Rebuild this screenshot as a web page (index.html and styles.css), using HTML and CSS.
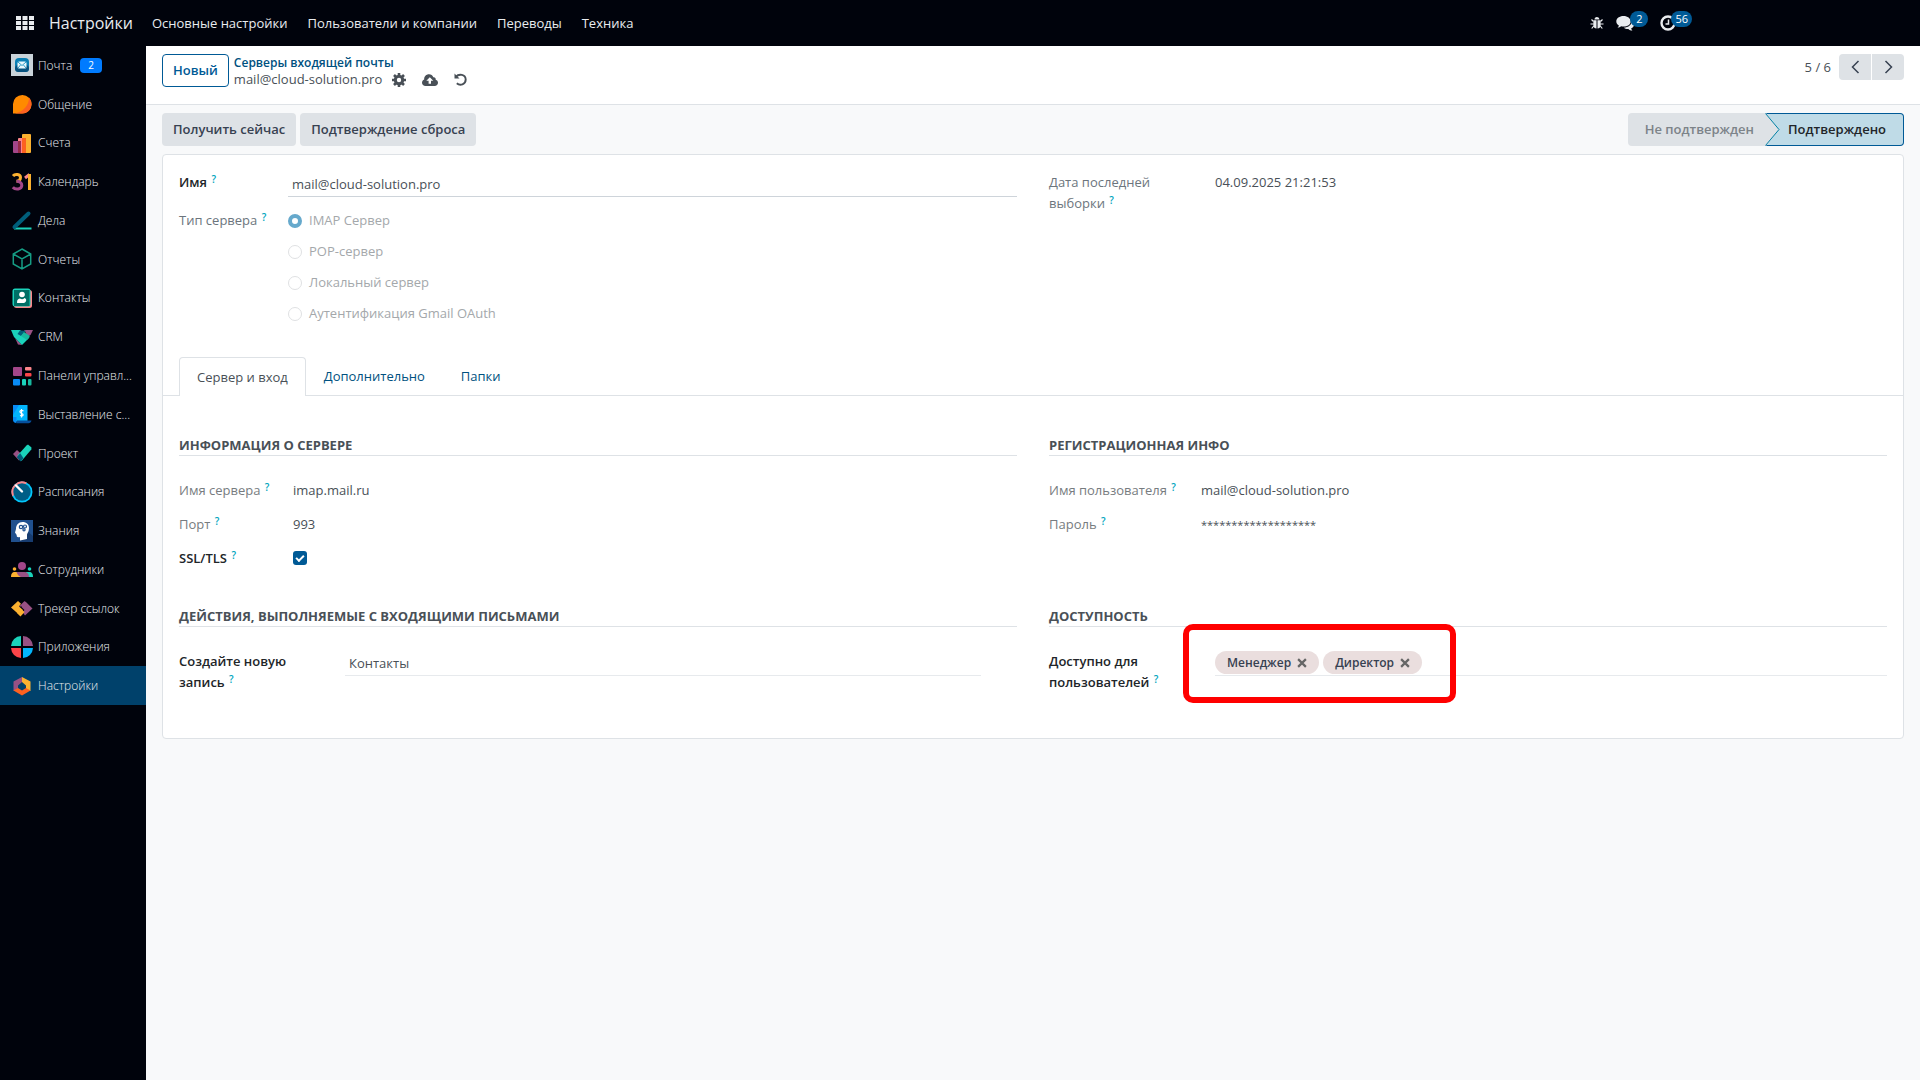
FILE: index.html
```html
<!DOCTYPE html>
<html lang="ru">
<head>
  <meta charset="UTF-8">
  <meta name="viewport" content="width=device-width, initial-scale=1.0">
  <title>Серверы входящей почты</title>
  <link rel="stylesheet" href="styles.css">
</head>
<body>
  <header class="navbar">
    <button class="apps-btn" aria-label="Приложения">
      <svg width="18" height="14" viewBox="0 0 18 14" fill="#e9ecef"><path d="M0 0h5v4H0zM6.500 0h5v4h-5zM13 0h5v4h-5zM0 5h5v4H0zM6.500 5h5v4h-5zM13 5h5v4h-5zM0 10h5v4H0zM6.500 10h5v4h-5zM13 10h5v4h-5z"/></svg>
    </button>
    <a class="brand" href="#">Настройки</a>
    <nav class="menu">
      <a href="#">Основные настройки</a>
      <a href="#">Пользователи и компании</a>
      <a href="#">Переводы</a>
      <a href="#">Техника</a>
    </nav>
    <div class="systray">
      <button aria-label="Отладка">
        <svg width="14" height="14" viewBox="0 0 14 14"><path d="M4.500 3.500a2.500 2.500 0 0 1 5 0z" fill="#e9ecef"/><path d="M3.500 4.200h3v8.300c-2 0-3.300-1.500-3.300-4zM7.500 4.200h3l.3 4.300c0 2.500-1.300 4-3.300 4z" fill="#e9ecef"/><path d="M3.500 5.500 1.500 3.500M10.500 5.500l2-2M3.300 8H.5M10.700 8h2.800M3.700 10l-2 2.500M10.300 10l2 2.500" stroke="#e9ecef" stroke-width="1.200" fill="none"/></svg>
      </button>
      <button class="chat" aria-label="Обсуждения">
        <svg width="19" height="15" viewBox="0 0 19 15" fill="#e9ecef"><path d="M7.500 0C3.400 0 .3 2.400.3 5.400c0 1.700 1 3.200 2.600 4.200-.2.800-.7 1.500-1.400 2.100 1.400 0 2.700-.6 3.700-1.400.7.200 1.500.3 2.300.3 4.100 0 7.200-2.300 7.200-5.200S11.600 0 7.500 0z"/><path d="M16 4.300c.1 4.200-3.600 7.300-8.300 7.500 1.200.9 2.900 1.300 4.700 1.200.9.900 2.300 1.600 4 1.600-.6-.6-1.100-1.300-1.300-2.100 1.900-.8 3-2.200 3-3.900 0-1.700-.8-3.300-2.100-4.300z"/></svg>
        <span class="count">2</span>
      </button>
      <button class="clock" aria-label="Действия">
        <svg width="16" height="16" viewBox="0 0 16 16" fill="none" stroke="#e9ecef"><circle cx="8" cy="8" r="6.500" stroke-width="2.400"/><path d="M8.500 4.500V9H5.500" stroke-width="1.500"/></svg>
        <span class="count">56</span>
      </button>
    </div>
  </header>

  <div class="layout">
    <aside class="sidebar">
      <ul>
        <li><a href="#">
          <svg width="22" height="22" viewBox="0 0 22 22"><path fill="#c9d3da" d="M0 0h22v22H0z"/><rect x="4" y="4" width="14" height="14" rx="4" fill="#0a7fb4"/><rect x="4" y="11" width="14" height="7" rx="3.500" fill="#07527f"/><rect x="6.500" y="7.500" width="9" height="7" rx="1.500" fill="#e8f7fc"/><path d="m7 8 4 3.500L15 8M7 14l2.500-3M15 14l-2.500-3" fill="none" stroke="#2b9cc8"/></svg>
          <span>Почта</span><b class="pill">2</b></a></li>
        <li><a href="#">
          <svg width="22" height="22" viewBox="0 0 22 22"><path fill="#ff8a00" d="M2 20.500V11a9.300 9.300 0 1 1 9.300 9.500z"/><path fill="#fc6120" d="M18 4.500c3.500 4 3 9.500.3 12.700-2 2.300-4.300 3.300-7 3.300H4C13 18.500 18 12 18 4.500z"/></svg>
          <span>Общение</span></a></li>
        <li><a href="#">
          <svg width="22" height="22" viewBox="0 0 22 22"><rect x="2" y="9" width="8" height="12" rx="1" fill="#a24689"/><rect x="7" y="6" width="8" height="15" rx="1" fill="#fc868b"/><path fill="#962b48" d="M7 9h3v12H7z"/><rect x="11" y="2" width="9" height="19" rx="1" fill="#fbb130"/><path fill="#fc6120" d="M11 6h4v15h-4z"/></svg>
          <span>Счета</span></a></li>
        <li><a href="#">
          <svg width="22" height="22" viewBox="0 0 22 22" fill="none" stroke-width="3"><path stroke="#fbb130" d="M2 5c2-2.500 7.500-2 7.500 1.500 0 2.500-2 3.800-4 3.800"/><path stroke="#a24689" d="M5.500 10.300c3.200 0 5.300 1.500 5.300 4 0 4.500-6.500 4.700-9 2"/><path stroke="#fc868b" d="m14 7 4.500-3.500"/><path stroke="#fbb130" d="M18.500 3v16"/></svg>
          <span>Календарь</span></a></li>
        <li><a href="#">
          <svg width="22" height="22" viewBox="0 0 22 22" fill="none"><path stroke="#1ad3bb" stroke-width="2" d="M3 19.500h17.500"/><path stroke="#005e7a" stroke-width="4" stroke-linecap="round" d="M3.500 18 17.500 4.500"/></svg>
          <span>Дела</span></a></li>
        <li><a href="#">
          <svg width="22" height="22" viewBox="0 0 22 22" fill="none" stroke="#159c84" stroke-width="1.500"><path d="m11 1 8.700 5v10L11 21l-8.700-5V6zM2.300 6l8.700 5 8.700-5M11 11v10"/></svg>
          <span>Отчеты</span></a></li>
        <li><a href="#">
          <svg width="22" height="22" viewBox="0 0 22 22"><rect x="3" y="3" width="18" height="18" rx="2.500" fill="#fc868b"/><rect x="1.500" y="1.500" width="18" height="18" rx="2.500" fill="#1ad3bb"/><path fill="#006f66" d="M3 3h15.500v16H3z"/><circle cx="11" cy="7.500" r="2.800" fill="#fff"/><path fill="#fff" d="M6 15.500c0-3 1.500-4 3-4 1.500 1 3 1 4.500-.500 1.500.500 2 1.500 1.500 3s-1.500 2-3 2H7c-.600 0-1 0-1-.500z"/></svg>
          <span>Контакты</span></a></li>
        <li><a href="#">
          <svg width="22" height="22" viewBox="0 0 22 22"><path fill="#985184" d="M13 4h9l-2.500 5L17 10.500z"/><path fill="#985184" d="m4 12 7 7-4-.500z"/><path fill="#1ad3bb" d="M0 4h9l9.500 7.500-7.500 7.500L3 11z"/><path fill="#005e7a" d="m9 4.500 6 .200-5 5.300-3.500-2z"/><path fill="#17b89f" d="m13 6 6 4-3 4-6-4z"/></svg>
          <span>CRM</span></a></li>
        <li><a href="#">
          <svg width="22" height="22" viewBox="0 0 22 22"><rect x="2" y="2" width="9" height="9" rx="1" fill="#a24689"/><rect x="14" y="2" width="6.500" height="3.500" rx="1" fill="#fc868b"/><rect x="14" y="8" width="6.500" height="3.500" rx="1" fill="#fc4449"/><rect x="2" y="14" width="7" height="6.500" rx="1" fill="#088bf5"/><rect x="11" y="14" width="4" height="6.500" rx="1" fill="#1ad3bb"/><rect x="17" y="14" width="3.500" height="6.500" rx="1" fill="#17b89f"/></svg>
          <span>Панели управл...</span></a></li>
        <li><a href="#">
          <svg width="22" height="22" viewBox="0 0 22 22"><path fill="#02b5fc" d="M2 2h14.500v17.500H7L2 16z"/><path fill="#088bf5" d="M2 2h6L2 12zM2 14h3.500v6C3 20 2 18.500 2 17z"/><path fill="#064f9c" d="M6 17.500h14.500c-.500 2-1.500 2.700-3 2.700H5c1 0 1.200-1.200 1-2.700z"/><path d="M12.500 8c-3-1.800-5 1-2.300 2.300 3 .800 2.200 3.700-1.200 2.200M10.500 6v8.500" fill="none" stroke="#fff" stroke-width="1.200"/></svg>
          <span>Выставление с...</span></a></li>
        <li><a href="#">
          <svg width="22" height="22" viewBox="0 0 22 22"><path fill="#985184" d="m2 12 4-4 6 5.500-4 5z"/><path fill="#1ad3bb" d="m15.500 3.500 1.500-1 3.500 3-.200 2L10.500 19 6.500 13.500z"/><path fill="#005e7a" d="m9.200 11.200 3.300 5-3 3.300-3.700-4.300z"/></svg>
          <span>Проект</span></a></li>
        <li><a href="#">
          <svg width="22" height="22" viewBox="0 0 22 22"><circle cx="11" cy="11" r="10.500" fill="#02c7fc"/><path fill="#fc868b" d="M1.500 15.500A10.500 10.500 0 0 1 16 1.800z"/><circle cx="11" cy="11" r="8.700" fill="#005e86"/><path stroke="#fff" stroke-width="2.400" stroke-linecap="round" d="m5 4.500 6 6"/></svg>
          <span>Расписания</span></a></li>
        <li><a href="#">
          <svg width="22" height="22" viewBox="0 0 22 22"><path fill="#20508e" d="M0 0h22v22H0z"/><path fill="#173c70" d="m16 11 6 5v6H8z"/><path fill="#fff" d="M11.500 2c4 0 6.500 2.500 6.500 6s-1.500 5-2 6.500V19l-7 1.500V17c-2.500.500-3.500 0-3.300-2L4 12.500 5 9c0-4 2.500-7 6.500-7z"/><g fill="none" stroke="#20508e" stroke-width="1.200"><circle cx="10" cy="7" r="1.700"/><circle cx="14" cy="6.500" r="1.500"/><circle cx="13" cy="9.700" r="1.100"/></g></svg>
          <span>Знания</span></a></li>
        <li><a href="#">
          <svg width="22" height="22" viewBox="0 0 22 22"><circle cx="11" cy="8" r="4" fill="#a24689"/><circle cx="3.500" cy="11" r="1.800" fill="#fbb130"/><circle cx="18.500" cy="11" r="1.800" fill="#1ad3bb"/><path fill="#fbb130" d="M0 19c0-3 1-5 4-5h3l4 5z"/><path fill="#1ad3bb" d="M22 19c0-3-1-5-4-5h-3l-2 5z"/><path fill="#985184" d="M5.500 14h8c3 0 4.500 2 4.500 5h-7c-3 0-4.500-2.500-5.500-5z"/></svg>
          <span>Сотрудники</span></a></li>
        <li><a href="#">
          <svg width="22" height="22" viewBox="0 0 22 22"><path fill="#985184" d="m14.500 4.500 7 7-7.500 7-2.500-3.500 2-2-3-3z"/><path fill="#fbb130" d="M0 10.500 7 4l3 2.700L8 9.500l4 3.500-3 5.500z"/><path fill="#985184" d="m8 9.500 5.500-5.500 3 4-3 3.500-2.500-2z"/><path fill="#fbb130" d="m10 12 3.500 3-4 4.500L6 16z"/></svg>
          <span>Трекер ссылок</span></a></li>
        <li><a href="#">
          <svg width="22" height="22" viewBox="0 0 22 22"><path fill="#1ad3bb" d="M10 0v10H0A10.500 10.500 0 0 1 10 0z"/><path fill="#985184" d="M12 0v10h10A10.500 10.500 0 0 0 12 0z"/><path fill="#fc4449" d="M10 22V12H0a10.500 10.500 0 0 0 10 10z"/><path fill="#02b5fc" d="M12 22V12h10a10.500 10.500 0 0 1-10 10z"/></svg>
          <span>Приложения</span></a></li>
        <li class="active"><a href="#">
          <svg width="22" height="22" viewBox="0 0 22 22"><path fill="#985184" d="M11 2v5l-4 3.500v4L2.500 16V6.500z"/><path fill="#fbb130" d="M11 2v5l4 3.500v4l4.500 1.500V6.500z"/><path fill="#fc6120" d="M2.500 15.500 7 13l4 2.500 4-2.500 4.500 2.500L11 20.500z"/></svg>
          <span>Настройки</span></a></li>
      </ul>
    </aside>

    <div class="content">
      <div class="control-panel">
        <button class="btn-new">Новый</button>
        <div class="breadcrumb">
          <a href="#">Серверы входящей почты</a>
          <div class="current">
            <span>mail@cloud-solution.pro</span>
            <button class="icon-btn gear" aria-label="Действие">
              <svg width="14" height="14" viewBox="0 0 14 14"><circle cx="7" cy="7" r="3.700" fill="none" stroke="#495057" stroke-width="3"/><path d="M7 0v3M7 11v3M0 7h3M11 7h3M2 2l2 2M10 10l2 2M12 2l-2 2M4 10l-2 2" stroke="#495057" stroke-width="2.600"/></svg>
            </button>
            <button class="icon-btn" aria-label="Сохранить">
              <svg width="16" height="12" viewBox="0 0 16 12"><path fill="#495057" d="M3.500 12C1.500 12 0 10.600 0 8.700 0 7.200.9 6 2.200 5.500 2 2.500 4.200.3 7 .3c2 0 3.700 1.200 4.300 3 1.500-.3 2.700.9 2.400 2.400 1.400.4 2.300 1.600 2.300 3 0 1.800-1.500 3.300-3.300 3.300z"/><path fill="#fff" d="m7.800 3.300 3.500 3.500H9v3H6.600v-3H4.300z"/></svg>
            </button>
            <button class="icon-btn" aria-label="Отменить">
              <svg width="13" height="13" viewBox="0 0 13 13"><path fill="none" stroke="#495057" stroke-width="1.900" d="M1.800 3.800C5 .3 11.500 1.300 11.700 6.500c0 5-5.700 6.700-8.900 3.700"/><path fill="#495057" d="M.5.500v5h5z"/></svg>
            </button>
          </div>
        </div>
        <div class="pager">
          <span>5 / 6</span>
          <div class="pager-buttons">
            <button aria-label="Назад"><svg width="9" height="14" viewBox="0 0 9 14"><path d="M7.500 1 1.500 7l6 6" fill="none" stroke="#374151" stroke-width="1.500"/></svg></button>
            <button aria-label="Вперед"><svg width="9" height="14" viewBox="0 0 9 14"><path d="m1.500 1 6 6-6 6" fill="none" stroke="#374151" stroke-width="1.500"/></svg></button>
          </div>
        </div>
      </div>

      <main>
        <div class="statusbar">
          <button class="btn">Получить сейчас</button>
          <button class="btn">Подтверждение сброса</button>
          <div class="status">
            <button class="step">Не подтвержден</button>
            <button class="step current-step">
              <svg class="arrow" width="15" height="33" viewBox="0 0 15 33"><path d="M0 0h1l13 16.500L1 33H0z" fill="#dee2e6"/><path d="m.5.500 13.500 16L.5 32.500" fill="none" stroke="#0180a5"/></svg>
              Подтверждено
            </button>
          </div>
        </div>

        <form class="sheet">
          <div class="columns top">
            <div>
              <div class="field name-field">
                <label class="strong" for="name">Имя <sup>?</sup></label>
                <input id="name" class="text-input" type="text" value="mail@cloud-solution.pro">
              </div>
              <div class="field name-field" role="radiogroup" aria-labelledby="type-label">
                <span id="type-label" class="label muted">Тип сервера <sup>?</sup></span>
                <div class="radios">
                  <label><input type="radio" name="type" checked disabled>IMAP Сервер</label>
                  <label><input type="radio" name="type" disabled>POP-сервер</label>
                  <label><input type="radio" name="type" disabled>Локальный сервер</label>
                  <label><input type="radio" name="type" disabled>Аутентификация Gmail OAuth</label>
                </div>
              </div>
            </div>
            <div>
              <div class="field wide-field">
                <span class="label muted">Дата последней выборки <sup>?</sup></span>
                <span>04.09.2025 21:21:53</span>
              </div>
            </div>
          </div>

          <div class="tabs" role="tablist">
            <button type="button" class="tab selected" role="tab" aria-selected="true">Сервер и вход</button>
            <button type="button" class="tab" role="tab">Дополнительно</button>
            <button type="button" class="tab" role="tab">Папки</button>
          </div>

          <div class="columns page">
            <section>
              <h2>Информация о сервере</h2>
              <div class="field server-field">
                <span class="label">Имя сервера <sup>?</sup></span>
                <span>imap.mail.ru</span>
              </div>
              <div class="field server-field">
                <span class="label">Порт <sup>?</sup></span>
                <span>993</span>
              </div>
              <div class="field server-field">
                <label class="strong" for="ssl">SSL/TLS <sup>?</sup></label>
                <input id="ssl" class="check" type="checkbox" checked>
              </div>
            </section>
            <section>
              <h2>Регистрационная инфо</h2>
              <div class="field login-field">
                <span class="label">Имя пользователя <sup>?</sup></span>
                <span>mail@cloud-solution.pro</span>
              </div>
              <div class="field login-field">
                <span class="label">Пароль <sup>?</sup></span>
                <span class="password">*******************</span>
              </div>
            </section>
            <section>
              <h2>Действия, выполняемые с входящими письмами</h2>
              <div class="field wide-field record">
                <label class="strong" for="record">Создайте новую запись <sup>?</sup></label>
                <input id="record" class="text-input light" type="text" value="Контакты">
              </div>
            </section>
            <section>
              <h2>Доступность</h2>
              <div class="field wide-field">
                <span class="label strong">Доступно для пользователей <sup>?</sup></span>
                <div class="tags">
                  <span class="tag">Менеджер <button type="button" aria-label="Удалить"><svg width="10" height="10" viewBox="0 0 9 9"><path d="m1 1 7 7M8 1 1 8" stroke="#666" stroke-width="2"/></svg></button></span>
                  <span class="tag">Директор <button type="button" aria-label="Удалить"><svg width="10" height="10" viewBox="0 0 9 9"><path d="m1 1 7 7M8 1 1 8" stroke="#666" stroke-width="2"/></svg></button></span>
                  <div class="highlight"></div>
                </div>
              </div>
            </section>
          </div>
        </form>
      </main>
    </div>
  </div>
</body>
</html>
```
FILE: styles.css
```css
* {
  box-sizing: border-box;
}

body {
  margin: 0;
  min-height: 100vh;
  display: flex;
  flex-direction: column;
  font-family: "Open Sans", "Noto Sans", sans-serif;
  font-size: 13px;
  line-height: 21px;
  color: #495057;
  background: #f8f9fa;
}

a {
  color: inherit;
  text-decoration: none;
}

button,
input {
  font: inherit;
  color: inherit;
}

button {
  padding: 0;
  border: none;
  background: none;
  cursor: pointer;
}

svg {
  display: block;
  flex: none;
}

/* top bar */
.navbar {
  height: 46px;
  display: flex;
  align-items: center;
  padding-left: 16px;
  background: #00030c;
  color: #e9ecef;
}

.brand {
  margin-left: 15px;
  font-size: 16px;
}

.menu {
  display: flex;
  gap: 20px;
  margin-left: 19px;
}

.systray {
  display: flex;
  align-items: center;
  gap: 12px;
  margin-left: auto;
  padding-right: 228px;
}

.systray button {
  display: flex;
  align-items: center;
}

.count {
  min-width: 18px;
  margin: -8px 0 0 -5px;
  padding: 0 4px;
  border-radius: 8px;
  background: #005a96;
  color: #fff;
  font-size: 11px;
  line-height: 16px;
}

/* sidebar */
.layout {
  flex: 1;
  display: flex;
}

.sidebar {
  width: 146px;
  flex: none;
  background: #00030c;
  color: #e9ecef;
  font-size: 12px;
  font-weight: 300;
}

.sidebar ul {
  height: 659px;
  margin: 0;
  padding: 0;
  display: flex;
  flex-direction: column;
  list-style: none;
}

.sidebar li {
  flex: 1;
  display: flex;
}

.sidebar .active {
  background: #00416b;
}

.sidebar a {
  flex: 1;
  display: flex;
  align-items: center;
  gap: 5px;
  padding: 0 4px 0 11px;
}

.sidebar span {
  white-space: nowrap;
}

.pill {
  margin-left: 3px;
  padding: 0 8px;
  border-radius: 4px;
  background: #007bff;
  color: #fff;
  font-size: 10px;
  line-height: 15px;
}

/* control panel */
.content {
  flex: 1;
  min-width: 0;
}

.control-panel {
  height: 59px;
  display: flex;
  align-items: flex-start;
  padding: 8px 16px 0;
  background: #fff;
  border-bottom: 1px solid #dee2e6;
}

.btn-new,
.btn,
.step {
  height: 33px;
  padding: 0 11px;
  border-radius: 4px;
  font-weight: 600;
}

.btn-new {
  padding: 0 10px;
  border: 1px solid #005a96;
  color: #005a96;
}

.breadcrumb {
  margin-left: 5px;
  line-height: 17px;
}

.breadcrumb a {
  color: #005180;
  font-size: 12px;
  font-weight: 600;
}

.current {
  display: flex;
  align-items: center;
}

.icon-btn {
  margin-left: 16px;
}

.gear {
  margin-left: 10px;
}

.pager {
  display: flex;
  align-items: center;
  gap: 8px;
  margin-left: auto;
}

.pager-buttons {
  display: flex;
  gap: 1px;
}

.pager-buttons button {
  width: 32px;
  height: 26px;
  display: grid;
  place-items: center;
  background: #dee2e6;
  border-radius: 4px 0 0 4px;
}

.pager-buttons button:last-child {
  border-radius: 0 4px 4px 0;
}

/* status bar */
main {
  padding: 8px 16px;
}

.statusbar {
  display: flex;
  gap: 4px;
  margin-bottom: 8px;
}

.btn {
  background: #dee2e6;
  color: #374151;
}

.status {
  display: flex;
  margin-left: auto;
}

.step {
  padding: 0 11px 0 17px;
  border-radius: 4px 0 0 4px;
  background: #dee2e6;
  color: #7c8389;
}

.current-step {
  display: flex;
  align-items: center;
  gap: 8px;
  padding: 0 17px 0 0;
  border: 1px solid #005a96;
  border-left: none;
  border-radius: 0 4px 4px 0;
  background: #bfdbe7;
  color: #212529;
}

/* form sheet */
.sheet {
  padding-bottom: 32px;
  background: #fff;
  border: 1px solid #dee2e6;
  border-radius: 4px;
}

.columns {
  display: grid;
  grid-template-columns: 1fr 1fr;
  column-gap: 32px;
  padding: 0 16px;
}

.top {
  padding-top: 17px;
}

.field {
  display: grid;
  align-items: start;
  margin-bottom: 13px;
}

.name-field {
  grid-template-columns: 109px 1fr;
}

.server-field {
  grid-template-columns: 114px 1fr;
}

.login-field {
  grid-template-columns: 152px 1fr;
}

.wide-field {
  grid-template-columns: 126px 1fr;
  column-gap: 40px;
}

.record {
  padding-right: 36px;
}

.label {
  color: #777c80;
}

.muted {
  color: #6c757d;
  font-weight: 500;
}

.strong {
  color: #212529;
  font-weight: 600;
}

.password {
  font-size: 11px;
}

sup {
  margin-left: 1px;
  color: #00a5bd;
  font-size: 10px;
  font-weight: 600;
  line-height: 0;
  vertical-align: 4px;
}

.text-input {
  width: 100%;
  height: 25px;
  padding: 2px 4px;
  border: none;
  border-bottom: 1px solid #ced4da;
  background: none;
}

.light {
  border-color: #e7eaed;
}

.radios {
  display: flex;
  flex-direction: column;
  gap: 10px;
  color: #a4a8ab;
}

.radios label {
  display: flex;
  align-items: center;
  gap: 7px;
}

.radios input {
  appearance: none;
  width: 14px;
  height: 14px;
  margin: 0;
  border: 1px solid #dfe1e3;
  border-radius: 50%;
}

.radios input:checked {
  border: 4px solid #66a9cc;
}

.check {
  appearance: none;
  width: 14px;
  height: 14px;
  margin: 3px 0;
  border-radius: 3px;
  background: #005a96;
  display: grid;
  place-items: center;
}

.check::before {
  content: "";
  width: 6px;
  height: 3px;
  margin-top: -2px;
  border: solid #fff;
  border-width: 0 0 2px 2px;
  transform: rotate(-45deg);
}

/* notebook */
.tabs {
  display: flex;
  margin-top: 20px;
  padding: 0 16px;
  border-bottom: 1px solid #dee2e6;
}

.tab {
  padding: 8px 17px;
  border: 1px solid transparent;
  border-bottom: none;
  color: #005180;
}

.selected {
  margin-bottom: -1px;
  border-color: #dee2e6;
  border-radius: 4px 4px 0 0;
  background: #fff;
  color: #495057;
}

.page {
  grid-template-rows: 171px auto;
  padding-top: 40px;
}

h2 {
  margin: 0 0 24px;
  border-bottom: 1px solid #dee2e6;
  font-size: 13px;
  line-height: 19px;
  text-transform: uppercase;
}

.tags {
  position: relative;
  display: flex;
  gap: 4px;
  height: 25px;
  border-bottom: 1px solid #e7eaed;
}

.tag {
  display: flex;
  align-items: center;
  gap: 6px;
  height: 23px;
  padding: 0 12px;
  border-radius: 12px;
  background: #eadede;
  color: #374151;
  font-size: 12px;
  font-weight: 600;
}

.highlight {
  position: absolute;
  left: -32px;
  top: -27px;
  width: 273px;
  height: 79px;
  border: 6px solid #f00;
  border-radius: 10px;
  pointer-events: none;
}
```
